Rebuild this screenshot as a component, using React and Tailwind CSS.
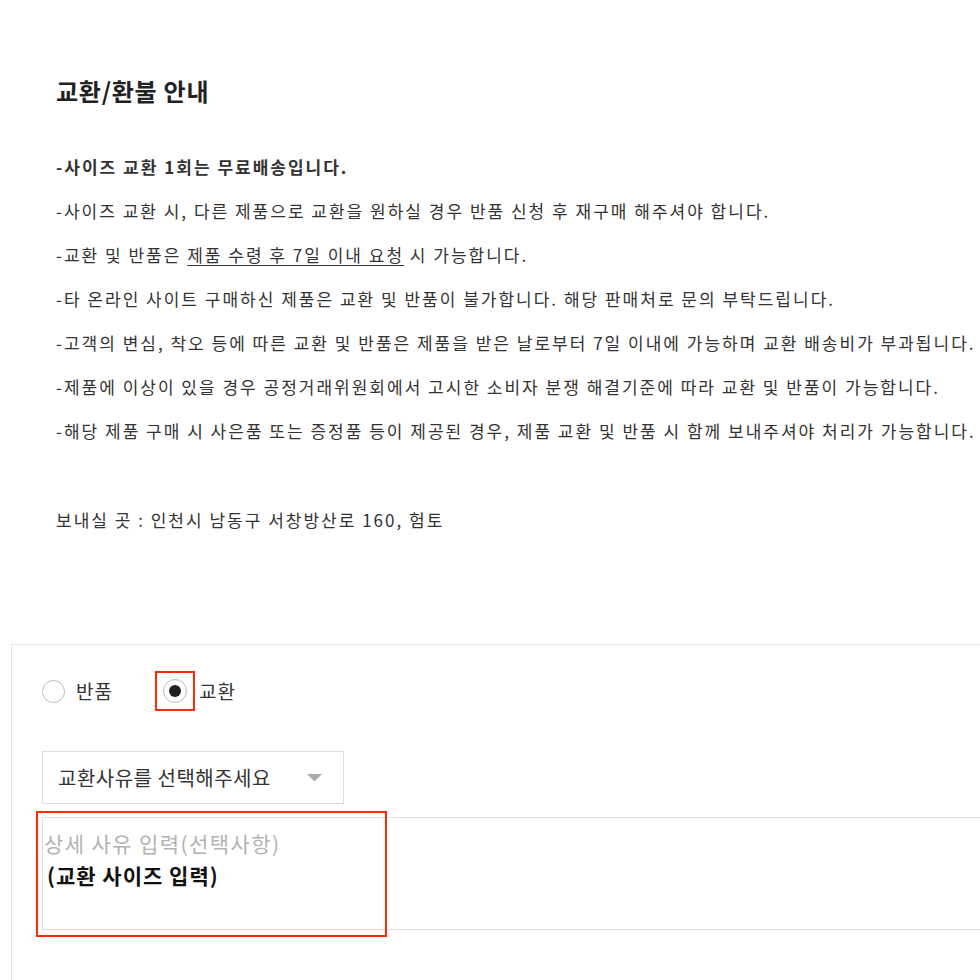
export default function App() {
  const font = { fontFamily: '"Noto Sans CJK KR", "Noto Sans", sans-serif' };
  const lines = [
    { t: "-사이즈 교환 시, 다른 제품으로 교환을 원하실 경우 반품 신청 후 재구매 해주셔야 합니다." },
    { u: true },
    { t: "-타 온라인 사이트 구매하신 제품은 교환 및 반품이 불가합니다. 해당 판매처로 문의 부탁드립니다." },
    { t: "-고객의 변심, 착오 등에 따른 교환 및 반품은 제품을 받은 날로부터 7일 이내에 가능하며 교환 배송비가 부과됩니다." },
    { t: "-제품에 이상이 있을 경우 공정거래위원회에서 고시한 소비자 분쟁 해결기준에 따라 교환 및 반품이 가능합니다." },
    { t: "-해당 제품 구매 시 사은품 또는 증정품 등이 제공된 경우, 제품 교환 및 반품 시 함께 보내주셔야 처리가 가능합니다." },
  ];
  return (
    <div className="w-[980px] h-[980px] overflow-hidden bg-white text-[#333]" style={font}>
      <section className="pl-[56px] pt-[77px]">
        <h2 className="text-[24px] leading-[28px] font-bold text-[#222] tracking-[0.75px]">교환/환불 안내</h2>
        <div className="mt-[40px] text-[17px] leading-[44px] tracking-[2px] whitespace-nowrap">
          <p className="font-bold">-사이즈 교환 1회는 무료배송입니다.</p>
          {lines.map((l, i) =>
            l.u ? (
              <p key={i}>
                -교환 및 반품은 <span className="underline underline-offset-[3px]">제품 수령 후 7일 이내 요청</span> 시 가능합니다.
              </p>
            ) : (
              <p key={i}>{l.t}</p>
            )
          )}
          <p className="mt-[45px]">보내실 곳 : 인천시 남동구 서창방산로 160, 험토</p>
        </div>
      </section>

      <div className="mt-[102px] ml-[11px] border-l border-t border-[#e6e6e6] pl-[30px] pt-[26px] h-[400px]">
        <div className="flex items-center h-[40px] text-[19px] tracking-[1px]">
          <label className="flex items-center">
            <span className="w-[23px] h-[23px] rounded-full border-[1.5px] border-[#bdbdbd] bg-white"></span>
            <span className="ml-[11px]">반품</span>
          </label>
          <label className="relative flex items-center ml-[42px]">
            <span className="relative flex items-center justify-center w-[40px] h-[40px]">
              <span className="w-[24px] h-[24px] rounded-full border-[1.5px] border-[#bdbdbd] bg-white flex items-center justify-center">
                <span className="w-[12px] h-[12px] rounded-full bg-[#222]"></span>
              </span>
              <span className="absolute inset-0 border-[2.5px] border-[#ff2a00]"></span>
            </span>
            <span className="ml-[4px]">교환</span>
          </label>
        </div>

        <div className="mt-[40px] w-[302px] h-[53px] border border-[#dedede] flex items-center justify-between pl-[15px] pr-[21px]">
          <span className="text-[20px] text-[#333] tracking-[0.5px]">교환사유를 선택해주세요</span>
          <svg width="15" height="8" viewBox="0 0 15 8">
            <polygon points="0,0 15,0 7.5,7.5" fill="#aaaaaa" />
          </svg>
        </div>

        <div className="relative mt-[13px] h-[113px] border border-[#dedede] border-r-0 pl-[1px] pt-[10px]">
          <p className="text-[21px] leading-[30px] text-[#b3b3b3] tracking-[1.4px]">상세 사유 입력(선택사항)</p>
          <p className="text-[21px] leading-[34px] font-bold text-[#111] pl-[3px] tracking-[1px]">(교환 사이즈 입력)</p>
          <span className="absolute left-[-7px] top-[-7px] w-[351px] h-[126px] border-[2.5px] border-[#ff2a00]"></span>
        </div>
      </div>
    </div>
  );
}
